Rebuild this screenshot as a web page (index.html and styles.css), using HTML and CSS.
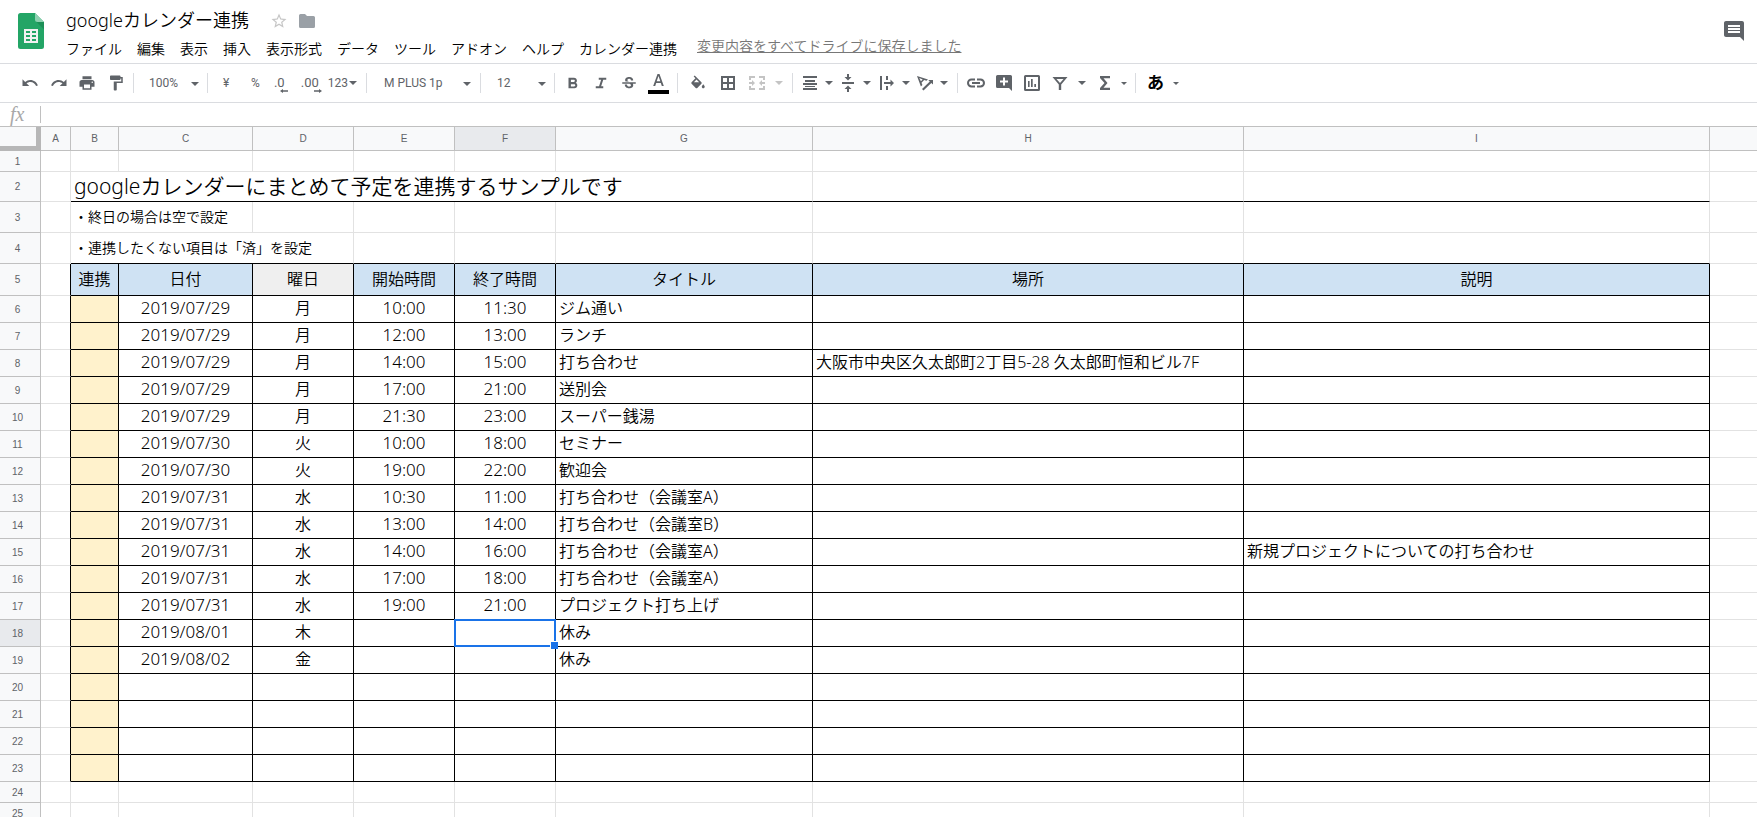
FILE: index.html
```html
<!DOCTYPE html>
<html lang="ja">
<head>
<meta charset="utf-8">
<title>googleカレンダー連携</title>
<link rel="stylesheet" href="styles.css">
</head>
<body>
<svg class="defs" aria-hidden="true">
  <symbol id="caret" viewBox="0 0 8 4"><path d="M0 0h8L4 4z"/></symbol>
  <symbol id="caret-small" viewBox="0 0 6 3"><path d="M0 0h6L3 3z"/></symbol>
</svg>

<header class="header">
  <svg class="logo" viewBox="0 0 26 36" aria-hidden="true">
    <path fill="#23a566" d="M2.500 0H17l9 9v24.500a2.500 2.500 0 0 1-2.500 2.500h-21A2.500 2.500 0 0 1 0 33.500v-31A2.500 2.500 0 0 1 2.500 0z"/>
    <path fill="#1c8f57" d="M18 8.500l8 8V9z"/>
    <path fill="#8ed1b1" d="M17 0l9 9h-6.500A2.500 2.500 0 0 1 17 6.500z"/>
    <path fill="#f1f1f1" d="M6 16v14h14V16zm2 2h4v2H8zm6 0h4v2h-4zm-6 4h4v2H8zm6 0h4v2h-4zm-6 4h4v2H8zm6 0h4v2h-4z"/>
  </svg>
  <div class="heading">
    <div class="title-row">
      <h1 class="title">googleカレンダー連携</h1>
      <button class="title-btn star" aria-label="スター"><svg viewBox="0 0 24 24"><path d="M22 9.240l-7.190-.62L12 2 9.190 8.630 2 9.240l5.460 4.730L5.820 21 12 17.270 18.180 21l-1.630-7.030L22 9.240zM12 15.400l-3.760 2.270 1-4.280-3.320-2.880 4.380-.38L12 6.100l1.710 4.040 4.380.38-3.320 2.880 1 4.280L12 15.400z"/></svg></button>
      <button class="title-btn folder" aria-label="移動"><svg viewBox="0 0 16 14"><path d="M1.500 0H6l2 2h6.500A1.500 1.500 0 0 1 16 3.500v9a1.500 1.500 0 0 1-1.500 1.500h-13A1.500 1.500 0 0 1 0 12.500v-11A1.500 1.500 0 0 1 1.500 0z"/></svg></button>
    </div>
    <div class="menu-row">
      <nav class="menus">
        <button>ファイル</button><button>編集</button><button>表示</button><button>挿入</button><button>表示形式</button><button>データ</button><button>ツール</button><button>アドオン</button><button>ヘルプ</button><button>カレンダー連携</button>
      </nav>
      <a class="saved" href="#">変更内容をすべてドライブに保存しました</a>
    </div>
  </div>
  <button class="comments" aria-label="コメント"><svg viewBox="0 0 24 24"><path d="M21.990 4c0-1.100-.89-2-1.990-2H4c-1.100 0-2 .9-2 2v12c0 1.100.9 2 2 2h14l4 4-.01-18zM18 14H6v-2h12v2zm0-3H6V9h12v2zm0-3H6V6h12v2z"/></svg></button>
</header>

<div class="toolbar" role="toolbar">
  <div class="group history">
    <button aria-label="元に戻す"><svg class="ic" viewBox="0 0 24 24"><path d="M12.500 8c-2.650 0-5.050.99-6.900 2.600L2 7v9h9l-3.620-3.620c1.390-1.160 3.160-1.880 5.120-1.880 3.540 0 6.550 2.310 7.600 5.500l2.370-.78C21.080 11.030 17.150 8 12.500 8z"/></svg></button>
    <button aria-label="やり直し"><svg class="ic" viewBox="0 0 24 24"><path d="M18.400 10.600C16.550 8.990 14.150 8 11.500 8c-4.650 0-8.580 3.030-9.960 7.220L3.900 16c1.050-3.190 4.050-5.500 7.600-5.500 1.950 0 3.730.72 5.120 1.880L13 16h9V7l-3.600 3.600z"/></svg></button>
    <button aria-label="印刷"><svg class="ic" viewBox="0 0 24 24"><path d="M19 8H5c-1.660 0-3 1.340-3 3v6h4v4h12v-4h4v-6c0-1.660-1.340-3-3-3zm-3 11H8v-5h8v5zm3-7c-.55 0-1-.45-1-1s.45-1 1-1 1 .45 1 1-.45 1-1 1zm-1-9H6v4h12V3z"/></svg></button>
    <button aria-label="書式を貼り付け"><svg class="ic" viewBox="0 0 24 24"><path d="M18 4V3c0-.55-.45-1-1-1H5c-.55 0-1 .45-1 1v4c0 .55.45 1 1 1h12c.55 0 1-.45 1-1V6h1v4H9v11c0 .55.45 1 1 1h2c.55 0 1-.45 1-1v-9h8V4h-3z"/></svg></button>
  </div>
  <div class="group zoom">
    <label class="pick"><select aria-label="ズーム"><option>100%</option></select><svg class="caret"><use href="#caret"/></svg></label>
  </div>
  <div class="group formats">
    <button class="txt yen">¥</button>
    <button class="txt percent">%</button>
    <button class="txt dec" aria-label="小数点以下の桁数を減らす"><span>.0</span><svg viewBox="0 0 8 4"><path d="M0 2l3-2v1.300h5v1.400H3V4z"/></svg></button>
    <button class="txt dec" aria-label="小数点以下の桁数を増やす"><span>.00</span><svg viewBox="0 0 8 4"><path d="M8 2L5 0v1.300H0v1.400h5V4z"/></svg></button>
    <button class="txt num">123<svg class="caret"><use href="#caret"/></svg></button>
  </div>
  <div class="group font">
    <label class="pick"><select aria-label="フォント"><option>M PLUS 1p</option></select><svg class="caret"><use href="#caret"/></svg></label>
  </div>
  <div class="group size">
    <label class="pick"><select aria-label="フォントサイズ"><option>12</option></select><svg class="caret"><use href="#caret"/></svg></label>
  </div>
  <div class="group style">
    <button aria-label="太字"><svg class="ic" viewBox="0 0 24 24"><path d="M15.600 11.790c.97-.67 1.650-1.770 1.650-2.790 0-2.260-1.750-4-4-4H6v14h8.040c2.090 0 3.710-1.700 3.710-3.790 0-1.520-.86-2.820-2.150-3.420zM9.200 7.500H13c.83 0 1.500.67 1.500 1.500s-.67 1.500-1.500 1.500H9.200zm4.300 9H9.200v-3h4.300c.83 0 1.500.67 1.500 1.500s-.67 1.500-1.500 1.500z"/></svg></button>
    <button aria-label="斜体"><svg class="ic" viewBox="0 0 24 24"><path d="M9 5v2.600h3.200L9.400 16.400H5V19h10v-2.600h-2.800L15 7.600h4V5z"/></svg></button>
    <button aria-label="取り消し線"><svg class="ic" viewBox="0 0 24 24"><path d="M7.240 9.750c-.26-.48-.39-1.030-.39-1.670 0-.61.13-1.160.4-1.670.26-.5.63-.93 1.110-1.290.48-.35 1.050-.63 1.700-.83.66-.19 1.390-.29 2.180-.29.81 0 1.540.11 2.210.34.66.22 1.230.54 1.690.94.47.4.83.88 1.080 1.430s.38 1.150.38 1.810h-3.010c0-.31-.05-.59-.15-.85-.09-.27-.24-.49-.44-.68-.2-.19-.45-.33-.75-.44-.3-.1-.66-.16-1.060-.16-.39 0-.74.04-1.030.13s-.53.21-.72.36c-.19.16-.34.34-.44.55-.1.21-.15.43-.15.66 0 .48.25.88.74 1.210.38.25.77.48 1.410.7H7.390zM21 13v-2H3v2h9.620c.18.07.4.14.55.2.37.17.66.34.87.51s.35.36.43.57c.07.2.11.43.11.69 0 .23-.05.45-.14.66-.09.2-.23.38-.42.53-.19.15-.42.26-.71.35-.29.08-.63.13-1.010.13-.43 0-.83-.04-1.180-.13s-.66-.23-.91-.42c-.25-.19-.45-.44-.59-.75s-.25-.76-.25-1.210H6.400c0 .55.08 1.130.24 1.580s.37.85.65 1.210c.28.35.6.66.98.92.37.26.78.48 1.220.65.44.17.9.3 1.380.39.48.08.96.13 1.440.13.8 0 1.530-.09 2.180-.28s1.210-.45 1.670-.79c.46-.34.82-.77 1.070-1.270s.38-1.070.38-1.710c0-.6-.1-1.140-.31-1.610-.05-.11-.11-.23-.17-.33H21z"/></svg></button>
    <button aria-label="テキストの色"><svg class="color" viewBox="0 0 21 21"><path d="M9.500 1L5.200 13H7.200l1-3h4.600l1 3h2L11.500 1zM8.700 8.300l1.800-5.200 1.800 5.200z"/><path class="ink" d="M0 17h21v4H0z"/></svg></button>
  </div>
  <div class="group cells">
    <button aria-label="塗りつぶしの色"><svg class="ic" viewBox="0 0 24 24"><path d="M16.560 10.940L7.620 2 6.210 3.410l2.380 2.380-5.150 5.150c-.59.59-.59 1.540 0 2.120l5.500 5.500c.29.29.68.44 1.060.44s.77-.15 1.060-.44l5.500-5.500c.59-.58.59-1.530 0-2.120zM6.500 11L10 7.300l3.600 3.700zM19 13.500s-2 2.170-2 3.500c0 1.100.9 2 2 2s2-.9 2-2c0-1.330-2-3.500-2-3.500z"/></svg></button>
    <button aria-label="枠線"><svg class="ic" viewBox="0 0 18 18"><path d="M2 2h14v14H2zm2 2v4h4V4zm6 0v4h4V4zm-6 6v4h4v-4zm6 0v4h4v-4z"/></svg></button>
    <button class="off" disabled aria-label="セルを結合"><svg class="ic" viewBox="0 0 18 18"><path d="M1 2h6v2H3v2H1zM11 2h6v4h-2V4h-4zM1 12h2v2h4v2H1zm14 0h2v4h-6v-2h4zM1 8h3V6l3 3-3 3v-2H1zm16 0h-3V6l-3 3 3 3v-2h3z"/></svg><svg class="caret"><use href="#caret"/></svg></button>
  </div>
  <div class="group layout">
    <button aria-label="水平方向の配置"><svg class="ic" viewBox="0 0 18 18"><path d="M2 2h14v2H2zm2 4h10v2H4zm-2 3h14v2H2zm2 3h10v1H4zm-2 2h14v2H2z"/></svg><svg class="caret"><use href="#caret"/></svg></button>
    <button aria-label="垂直方向の配置"><svg class="ic" viewBox="0 0 18 18"><path d="M3 8h12v2H3zM8 0h2v3h2.500L9 6.500 5.500 3H8zm0 18h2v-3h2.500L9 11.500 5.500 15H8z"/></svg><svg class="caret"><use href="#caret"/></svg></button>
    <button aria-label="テキストの折り返し"><svg class="ic" viewBox="0 0 18 18"><path d="M2 2h2v14H2zM8 2h2v4H8zm0 10h2v4H8zM6 8h6.500V5.500L16 9l-3.500 3.500V10H6z"/></svg><svg class="caret"><use href="#caret"/></svg></button>
    <button aria-label="テキストの回転"><svg class="ic" viewBox="0 0 18 18"><path fill-rule="evenodd" d="M1 2l11 3.400-1.600 1.400-2.200-.7-2.700 2.600.9 2.300L4.900 12.500zM3.300 4l1.600 3.300 1.800-1.700zM6 15l7.800-7.500L12.300 6h4.700v4.500L15.300 9l-7.800 7.500z"/></svg><svg class="caret"><use href="#caret"/></svg></button>
  </div>
  <div class="group insert">
    <button aria-label="リンクを挿入"><svg class="ic" viewBox="0 0 18 18"><path d="M0 9a4.500 4.500 0 0 1 4.500-4.500H8v2H4.500a2.500 2.500 0 0 0 0 5H8v2H4.500A4.500 4.500 0 0 1 0 9zm5-1h8v2H5zm5-3.500h3.500a4.500 4.500 0 0 1 0 9H10v-2h3.500a2.500 2.500 0 0 0 0-5H10z"/></svg></button>
    <button aria-label="コメントを挿入"><svg class="ic" viewBox="0 0 18 18"><path d="M2.500 1h13A1.500 1.500 0 0 1 17 2.500V17l-3-3H2.500A1.500 1.500 0 0 1 1 12.500v-10A1.500 1.500 0 0 1 2.500 1zM8 3.500v3H5v2h3v3h2v-3h3v-2h-3v-3z"/></svg></button>
    <button aria-label="グラフを挿入"><svg class="ic" viewBox="0 0 18 18"><path fill-rule="evenodd" d="M2.500 1h13A1.500 1.500 0 0 1 17 2.500v13a1.500 1.500 0 0 1-1.500 1.500h-13A1.500 1.500 0 0 1 1 15.500v-13A1.500 1.500 0 0 1 2.500 1zM3 3v12h12V3zm2 4h1.600v6H5zm3-2h1.700v8H8zm3.300 5H13v3h-1.700z"/></svg></button>
    <button class="filter" aria-label="フィルタ"><svg class="ic" viewBox="0 0 18 18"><path fill-rule="evenodd" d="M1.500 3h15l-6.300 7.500V16H7.800v-5.500zM5.500 5L9 9l3.500-4z"/></svg><svg class="caret"><use href="#caret"/></svg></button>
    <button class="sum" aria-label="関数"><svg class="ic" viewBox="0 0 18 18"><path d="M4 2h10v2.300H7.500L11.500 9l-4 4.700H14V16H4v-2l4.500-5L4 4z"/></svg><svg class="caret small"><use href="#caret-small"/></svg></button>
  </div>
  <div class="group ime">
    <button class="kana">あ<svg class="caret small"><use href="#caret-small"/></svg></button>
  </div>
</div>

<div class="formula">
  <label class="fx" for="formula-input">fx</label>
  <input class="formula-input" id="formula-input" type="text">
</div>

<main class="sheet">
<table class="grid">
  <colgroup><col class="c-head"><col class="c-a"><col class="c-b"><col class="c-c"><col class="c-time"><col class="c-time"><col class="c-time"><col class="c-g"><col class="c-h"><col class="c-i"><col></colgroup>
  <thead>
    <tr><th class="corner"></th><th>A</th><th>B</th><th>C</th><th>D</th><th>E</th><th class="active">F</th><th>G</th><th>H</th><th>I</th><th></th></tr>
  </thead>
  <tbody class="intro">
    <tr class="plain"><th>1</th><td></td><td></td><td></td><td></td><td></td><td></td><td></td><td></td><td></td><td></td></tr>
    <tr class="doc-title"><th>2</th><td></td><td class="rule" colspan="6">googleカレンダーにまとめて予定を連携するサンプルです</td><td class="rule"></td><td class="rule"></td><td></td></tr>
    <tr class="note"><th>3</th><td></td><td colspan="2">・終日の場合は空で設定</td><td></td><td></td><td></td><td></td><td></td><td></td><td></td></tr>
    <tr class="note above"><th>4</th><td></td><td colspan="3">・連携したくない項目は「済」を設定</td><td></td><td></td><td></td><td></td><td></td><td></td></tr>
  </tbody>
  <tbody class="data">
    <tr class="fields"><th>5</th><td></td><td>連携</td><td>日付</td><td class="auto">曜日</td><td>開始時間</td><td>終了時間</td><td>タイトル</td><td>場所</td><td>説明</td><td></td></tr>
    <tr><th>6</th><td></td><td></td><td>2019/07/29</td><td>月</td><td>10:00</td><td>11:30</td><td>ジム通い</td><td></td><td></td><td></td></tr>
    <tr><th>7</th><td></td><td></td><td>2019/07/29</td><td>月</td><td>12:00</td><td>13:00</td><td>ランチ</td><td></td><td></td><td></td></tr>
    <tr><th>8</th><td></td><td></td><td>2019/07/29</td><td>月</td><td>14:00</td><td>15:00</td><td>打ち合わせ</td><td>大阪市中央区久太郎町2丁目5-28 久太郎町恒和ビル7F</td><td></td><td></td></tr>
    <tr><th>9</th><td></td><td></td><td>2019/07/29</td><td>月</td><td>17:00</td><td>21:00</td><td>送別会</td><td></td><td></td><td></td></tr>
    <tr><th>10</th><td></td><td></td><td>2019/07/29</td><td>月</td><td>21:30</td><td>23:00</td><td>スーパー銭湯</td><td></td><td></td><td></td></tr>
    <tr><th>11</th><td></td><td></td><td>2019/07/30</td><td>火</td><td>10:00</td><td>18:00</td><td>セミナー</td><td></td><td></td><td></td></tr>
    <tr><th>12</th><td></td><td></td><td>2019/07/30</td><td>火</td><td>19:00</td><td>22:00</td><td>歓迎会</td><td></td><td></td><td></td></tr>
    <tr><th>13</th><td></td><td></td><td>2019/07/31</td><td>水</td><td>10:30</td><td>11:00</td><td>打ち合わせ（会議室A）</td><td></td><td></td><td></td></tr>
    <tr><th>14</th><td></td><td></td><td>2019/07/31</td><td>水</td><td>13:00</td><td>14:00</td><td>打ち合わせ（会議室B）</td><td></td><td></td><td></td></tr>
    <tr><th>15</th><td></td><td></td><td>2019/07/31</td><td>水</td><td>14:00</td><td>16:00</td><td>打ち合わせ（会議室A）</td><td></td><td>新規プロジェクトについての打ち合わせ</td><td></td></tr>
    <tr><th>16</th><td></td><td></td><td>2019/07/31</td><td>水</td><td>17:00</td><td>18:00</td><td>打ち合わせ（会議室A）</td><td></td><td></td><td></td></tr>
    <tr><th>17</th><td></td><td></td><td>2019/07/31</td><td>水</td><td>19:00</td><td>21:00</td><td>プロジェクト打ち上げ</td><td></td><td></td><td></td></tr>
    <tr><th class="active">18</th><td></td><td></td><td>2019/08/01</td><td>木</td><td></td><td class="selected"></td><td>休み</td><td></td><td></td><td></td></tr>
    <tr><th>19</th><td></td><td></td><td>2019/08/02</td><td>金</td><td></td><td></td><td>休み</td><td></td><td></td><td></td></tr>
    <tr><th>20</th><td></td><td></td><td></td><td></td><td></td><td></td><td></td><td></td><td></td><td></td></tr>
    <tr><th>21</th><td></td><td></td><td></td><td></td><td></td><td></td><td></td><td></td><td></td><td></td></tr>
    <tr><th>22</th><td></td><td></td><td></td><td></td><td></td><td></td><td></td><td></td><td></td><td></td></tr>
    <tr><th>23</th><td></td><td></td><td></td><td></td><td></td><td></td><td></td><td></td><td></td><td></td></tr>
  </tbody>
  <tbody>
    <tr class="plain"><th>24</th><td></td><td></td><td></td><td></td><td></td><td></td><td></td><td></td><td></td><td></td></tr>
    <tr class="plain"><th>25</th><td></td><td></td><td></td><td></td><td></td><td></td><td></td><td></td><td></td><td></td></tr>
  </tbody>
</table>
</main>
</body>
</html>
```

FILE: styles.css
```css
* { box-sizing: border-box; }

body {
  margin: 0;
  height: 100vh;
  display: flex;
  flex-direction: column;
  overflow: hidden;
  background: #fff;
  color: #000;
  font-family: "Noto Sans", "Noto Sans CJK JP", sans-serif;
  font-weight: 350;
}

button, select, input {
  margin: 0;
  padding: 0;
  border: 0;
  background: none;
  color: inherit;
  font: inherit;
}

svg { display: block; fill: currentColor; }
.defs { position: absolute; width: 0; height: 0; }

/* Header */
.header {
  display: flex;
  align-items: flex-start;
  height: 64px;
  flex: none;
  padding: 0 11px 0 18px;
  border-bottom: 1px solid #dadce0;
}
.logo { width: 26px; height: 36px; margin-top: 13px; flex: none; }
.heading { flex: 1; margin-left: 22px; padding-top: 8px; }
.title-row { display: flex; align-items: center; height: 26px; }
.title { margin: 0; padding-bottom: 2px; font-size: 18px; font-weight: inherit; line-height: 24px; white-space: nowrap; }
.star { margin-left: 21px; color: #c6c6c6; }
.star svg { width: 18px; height: 18px; }
.folder { margin-left: 11px; color: #9aa0a6; }
.folder svg { width: 16px; height: 14px; }
.menu-row { display: flex; align-items: flex-start; margin-top: 2px; }
.menus { display: flex; gap: 15px; padding-top: 3px; }
.menus button, .saved { font-size: 14px; line-height: 20px; white-space: nowrap; }
.saved { margin-left: 20px; color: #777; }
.comments { margin-top: 19px; color: #5f6368; }
.comments svg { width: 24px; height: 24px; }

/* Toolbar */
.toolbar {
  display: flex;
  align-items: center;
  height: 39px;
  flex: none;
  border-bottom: 1px solid #dadce0;
  color: #5f6368;
  font-family: Roboto, "Noto Sans CJK JP", sans-serif;
  font-size: 12px;
  font-weight: 400;
}
.group {
  display: flex;
  align-items: center;
  justify-content: space-between;
  height: 20px;
  flex: none;
  border-right: 1px solid #dadce0;
}
.group button { display: flex; align-items: center; }
.ic { width: 18px; height: 18px; }
.caret { width: 8px; height: 4px; margin-left: 6px; }
.caret.small { width: 6px; height: 3px; margin-left: 9px; }
.history { width: 134px; padding: 0 8px 0 21px; }
.zoom { width: 74px; padding: 0 8px 0 15px; }
.formats { width: 159px; padding: 0 9px 0 15px; justify-content: flex-start; }
.font { width: 114px; padding: 0 9px 0 17px; }
.size { width: 74px; padding: 0 8px 0 16px; }
.style { width: 123px; padding: 0 8px 0 9px; }
.cells { width: 115px; padding: 0 9px 0 11px; }
.layout { width: 165px; padding: 0 9px 0 8px; }
.insert { width: 178px; padding: 0 8px 0 9px; }
.ime { padding-left: 11px; border-right: 0; }

.pick { display: grid; flex: 1; align-items: center; }
.pick select, .pick .caret { grid-area: 1 / 1; }
.pick select { width: 100%; appearance: none; }
.pick .caret { justify-self: end; margin: 2px 0 0; pointer-events: none; }
.txt { font-size: 12px; line-height: 20px; }
.yen { width: 28px; }
.percent { width: 23px; }
.dec { width: 27px; font-size: 13px; }
.dec span { line-height: 20px; }
.dec svg { width: 8px; height: 4px; flex: none; margin: 15px 0 0 -5px; }
.num .caret { margin-left: 1px; }
.color { width: 21px; height: 21px; }
.ink { fill: #000; }
.off { color: #c4c4c4; }
.off .caret { margin-left: 9px; }
.filter .caret { margin-left: 9px; }
.sum .caret.small { margin-left: 7px; }
.kana { color: #000; font-size: 17px; font-weight: 700; line-height: 20px; }
.kana .caret { color: #5f6368; }

/* Formula bar */
.formula {
  display: flex;
  align-items: center;
  height: 24px;
  flex: none;
  border-bottom: 1px solid #c0c0c0;
}
.fx {
  width: 41px;
  padding-left: 10px;
  border-right: 1px solid #c0c0c0;
  color: #a8a8a8;
  font: italic 20px/17px "Liberation Serif", serif;
}
.formula-input { flex: 1; height: 20px; padding: 0 4px; outline: 0; }

/* Sheet */
.sheet { flex: 1; min-height: 0; overflow: hidden; }
.grid { width: 100%; table-layout: fixed; border-collapse: separate; border-spacing: 0; }
.c-head { width: 41px; }
.c-a { width: 30px; }
.c-b { width: 48px; }
.c-c { width: 134px; }
.c-time { width: 101px; }
.c-g { width: 257px; }
.c-h { width: 431px; }
.c-i { width: 466px; }

.grid th, .grid td {
  padding: 0 3px;
  border: solid #e2e2e2;
  border-width: 0 1px 1px 0;
  line-height: 20px;
  white-space: nowrap;
  overflow: hidden;
}
.grid th {
  border-color: #c0c0c0;
  background: #f8f9fa;
  color: #5f6368;
  font: 400 10px/16px "Liberation Sans", Arial, sans-serif;
}
.grid tbody th { padding: 1px 8px 0 3px; }
.grid th.active { background: #e8eaed; }
.grid th.corner { border: solid #b7b7b7; border-width: 0 5px 5px 0; }
.grid tr > :last-child { border-right: 0; }
thead tr { height: 24px; }
.plain { height: 21px; }
.doc-title { height: 30px; font-size: 21px; }
.doc-title td { padding-bottom: 2px; }
.doc-title .rule { border-bottom-color: #000; }
.note { height: 31px; font-size: 14px; }
.above td:nth-child(n+3):not(:last-child) { border-bottom-color: #000; }

.data tr { height: 27px; font-size: 16px; text-align: center; }
.data tr.fields { height: 32px; }
.grid .data td { padding-bottom: 2px; }
.data td:not(:last-child) { border-color: #000; }
.data td:nth-child(2) { border-bottom-color: #e2e2e2; }
.data td:nth-child(3) { background: #fff2cc; }
.data tr:not(.fields) td:is(:nth-child(4), :nth-child(6), :nth-child(7)) { font-size: 17px; }
.data td:nth-child(n+8) { text-align: left; }
.data .fields td:nth-child(n+3):not(:last-child) { background: #cfe2f3; text-align: center; }
.data .fields td.auto:nth-child(n+3):not(:last-child) { background: #efefef; }

.grid td.selected { position: relative; overflow: visible; }
.selected::before {
  content: "";
  position: absolute;
  inset: -1px;
  border: 2px solid #1a73e8;
}
.selected::after {
  content: "";
  position: absolute;
  right: -3px;
  bottom: -3px;
  width: 7px;
  height: 7px;
  border: solid #fff;
  border-width: 1px 0 0 1px;
  background: #1a73e8;
}
```
